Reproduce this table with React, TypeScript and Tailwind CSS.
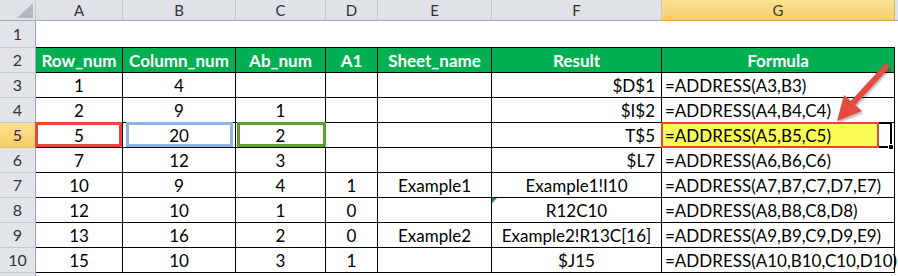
import React from 'react';

// Sheet columns with their pixel widths
const COLS = [
  { name: 'A', w: 'w-[87px]' },
  { name: 'B', w: 'w-[113px]' },
  { name: 'C', w: 'w-[90px]' },
  { name: 'D', w: 'w-[52px]' },
  { name: 'E', w: 'w-[114px]' },
  { name: 'F', w: 'w-[170px]' },
  { name: 'G', w: 'w-[233px]' },
];

const HEADERS = ['Row_num', 'Column_num', 'Ab_num', 'A1', 'Sheet_name', 'Result', 'Formula'];

type Row = { n: number; cells: string[]; resultAlign: 'right' | 'center' };

const ROWS: Row[] = [
  { n: 3, cells: ['1', '4', '', '', '', '$D$1', '=ADDRESS(A3,B3)'], resultAlign: 'right' },
  { n: 4, cells: ['2', '9', '1', '', '', '$I$2', '=ADDRESS(A4,B4,C4)'], resultAlign: 'right' },
  { n: 5, cells: ['5', '20', '2', '', '', 'T$5', '=ADDRESS(A5,B5,C5)'], resultAlign: 'right' },
  { n: 6, cells: ['7', '12', '3', '', '', '$L7', '=ADDRESS(A6,B6,C6)'], resultAlign: 'right' },
  { n: 7, cells: ['10', '9', '4', '1', 'Example1', 'Example1!I10', '=ADDRESS(A7,B7,C7,D7,E7)'], resultAlign: 'center' },
  { n: 8, cells: ['12', '10', '1', '0', '', 'R12C10', '=ADDRESS(A8,B8,C8,D8)'], resultAlign: 'center' },
  { n: 9, cells: ['13', '16', '2', '0', 'Example2', 'Example2!R13C[16]', '=ADDRESS(A9,B9,C9,D9,E9)'], resultAlign: 'center' },
  { n: 10, cells: ['15', '10', '3', '1', '', '$J15', '=ADDRESS(A10,B10,C10,D10)'], resultAlign: 'center' },
];

const font = "font-['Lato',_'Liberation_Sans',_sans-serif]";

function RowHead({ n, active, h }: { n?: number; active?: boolean; h: string }) {
  return (
    <div
      className={`${h} w-[36px] shrink-0 flex items-center justify-center border-r border-b text-[16px] ${
        active
          ? 'bg-gradient-to-b from-[#fbe28e] to-[#f4cd66] border-r-[#e2a33d] border-b-[#e9b958] text-[#2d2d2d]'
          : 'bg-[#e1e4e9] border-r-[#a2a8b0] border-b-[#c6cad0] text-[#333]'
      }`}
    >
      {n}
    </div>
  );
}

function DataRow({ row }: { row: Row }) {
  const sel = row.n === 5;
  return (
    <div className="flex h-[25px]">
      <RowHead n={row.n} active={sel} h="h-[25px]" />
      {row.cells.map((v, i) => {
        const col = COLS[i];
        let align = 'justify-center';
        if (i === 5) align = row.resultAlign === 'right' ? 'justify-end pr-[6px]' : 'justify-center';
        if (i === 6) align = 'justify-start pl-[3px]';
        return (
          <div
            key={col.name}
            className={`${col.w} relative shrink-0 h-full flex items-center pt-[2px] border-r border-b border-black text-[17px] text-black whitespace-nowrap ${align}`}
          >
            {sel && i === 0 && <div className="absolute -top-px -left-px right-0 bottom-0 border-[3px] border-[#e8453d]" />}
            {sel && i === 1 && <div className="absolute -top-px left-[3px] right-[2px] bottom-0 border-[3px] border-[#8fb4e3]" />}
            {sel && i === 2 && <div className="absolute -top-px left-[1px] -right-px bottom-0 border-[3px] border-[#5d9e2e]" />}
            {sel && i === 6 ? (
              <>
                {/* active cell outline, then the highlighted formula box on top */}
                <div className="absolute -top-px -left-px right-[2px] -bottom-px border-2 border-black" />
                <div className="absolute -bottom-[3px] right-0 w-[6px] h-[6px] bg-black border border-white" />
                <div className="absolute -top-px -left-px w-[218px] -bottom-px bg-[#fbfb55] border-2 border-[#e8453d]" />
                <span className="relative">{v}</span>
              </>
            ) : (
              v
            )}
            {row.n === 8 && i === 5 && (
              <div className="absolute top-0 left-0 w-0 h-0 border-t-[5px] border-t-[#1f8a3f] border-r-[5px] border-r-transparent" />
            )}
          </div>
        );
      })}
      <div className="w-[3px] shrink-0" />
    </div>
  );
}

export default function App() {
  return (
    <div className={`relative w-[898px] h-[276px] overflow-hidden bg-white ${font}`}>
      {/* column letters */}
      <div className="flex h-[21px]">
        <div className="w-[36px] h-full shrink-0 bg-[#dfe2e7] border-r border-b border-r-[#c2c6cc] border-b-[#a2a8b0]">
          <svg width="35" height="20" viewBox="0 0 35 20">
            <polygon points="17,18 33,18 33,3" fill="#b3b7bd" />
          </svg>
        </div>
        {COLS.map((c) => (
          <div
            key={c.name}
            className={`${c.w} h-full shrink-0 flex items-center justify-center border-r border-b text-[15px] ${
              c.name === 'G'
                ? 'bg-gradient-to-b from-[#fbe292] to-[#f5cf6b] border-r-[#e2b35a] border-b-[#e9a23b] text-[#3a3a3a]'
                : 'bg-[#dfe2e7] border-r-[#c2c6cc] border-b-[#a2a8b0] text-[#333]'
            }`}
          >
            {c.name}
          </div>
        ))}
        <div className="w-[3px] h-full shrink-0 bg-[#dfe2e7] border-b border-b-[#a2a8b0]" />
      </div>

      {/* row 1: blank */}
      <div className="flex h-[27px]">
        <RowHead n={1} h="h-[27px]" />
        {COLS.map((c) => (
          <div key={c.name} className={`${c.w} h-full shrink-0 border-b border-black`} />
        ))}
      </div>

      {/* row 2: green titles */}
      <div className="flex h-[25px]">
        <RowHead n={2} h="h-[25px]" />
        {COLS.map((c, i) => (
          <div
            key={c.name}
            className={`${c.w} h-full shrink-0 flex items-center justify-center pt-[2px] bg-[#00b050] border-r border-b border-black text-white font-bold text-[17px] whitespace-nowrap`}
          >
            {HEADERS[i]}
          </div>
        ))}
      </div>

      {ROWS.map((r) => (
        <DataRow key={r.n} row={r} />
      ))}

      <div className="flex h-[3px]">
        <div className="w-[36px] h-full shrink-0 bg-[#e1e4e9] border-r border-r-[#a2a8b0]" />
      </div>

      {/* pointer arrow */}
      <svg
        className="absolute inset-0 pointer-events-none"
        width="898"
        height="276"
        viewBox="0 0 898 276"
      >
        <defs>
          <filter id="arrowShadow" x="-20%" y="-20%" width="140%" height="140%">
            <feDropShadow dx="1" dy="2" stdDeviation="1.2" floodColor="#000" floodOpacity="0.3" />
          </filter>
        </defs>
        <polygon
          points="837,121 844,95 850.8,101.1 885.8,63 890.2,67 855.2,105.1 862,111.1"
          fill="#e5483f"
          filter="url(#arrowShadow)"
        />
      </svg>
    </div>
  );
}
